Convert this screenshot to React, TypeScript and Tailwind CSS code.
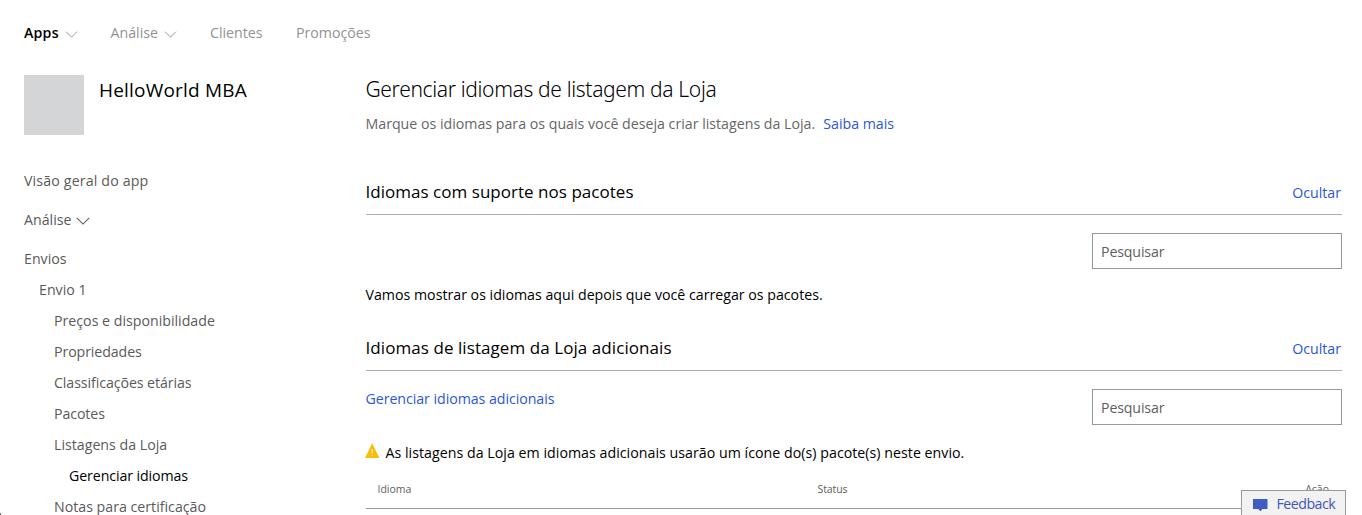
import { ReactNode } from "react";

function Chevron({ className }: { className: string }) {
  return (
    <svg viewBox="0 0 14 8" className={className} fill="none" stroke="currentColor" strokeWidth="1.05">
      <path d="M0.8 0.8 L7 7 L13.2 0.8" />
    </svg>
  );
}

function SectionHeader({ children, tracking }: { children: ReactNode; tracking: string }) {
  return (
    <div className="flex h-9 items-start justify-between border-b border-[#ababab]">
      <h2 className={`pt-px text-[17px] leading-6 ${tracking}`}>{children}</h2>
      <a className="mr-px pt-1 leading-5 text-[#2b56d6]">Ocultar</a>
    </div>
  );
}

function SearchBox() {
  return (
    <div className="h-9 w-[250px] border border-[#999] pt-2 pl-2 leading-5 tracking-[-0.15px] text-[#5e5e5e]">
      Pesquisar
    </div>
  );
}

const pages = [
  { label: "Preços e disponibilidade", tracking: "tracking-normal" },
  { label: "Propriedades", tracking: "tracking-[-0.1px]" },
  { label: "Classificações etárias", tracking: "tracking-[-0.08px]" },
  { label: "Pacotes", tracking: "tracking-[-0.1px]" },
  { label: "Listagens da Loja", tracking: "tracking-normal" },
];

function Sidebar() {
  return (
    <aside className="w-[341.5px] shrink-0">
      <div className="flex h-[90px] gap-[15px]">
        <div className="size-[60px] bg-[#d3d5d7]" />
        <h3 className="pt-[1px] text-[19px] leading-7 tracking-[0.2px] text-black">HelloWorld MBA</h3>
      </div>
      <nav className="flex flex-col leading-[31px] text-[#5a5a5a]">
        <a className="mb-2 tracking-[0.15px]">Visão geral do app</a>
        <a className="mb-2 flex items-center gap-[5px]">
          Análise
          <Chevron className="mt-0.5 h-2 w-3.5" />
        </a>
        <a>Envios</a>
        <a className="pl-[15px]">Envio 1</a>
        {pages.map(({ label, tracking }) => (
          <a key={label} className={`pl-[30px] ${tracking}`}>
            {label}
          </a>
        ))}
        <a className="pl-[45px] tracking-[-0.1px] text-black">Gerenciar idiomas</a>
        <a className="pl-[30px]">Notas para certificação</a>
      </nav>
    </aside>
  );
}

export default function App() {
  return (
    <div className="relative h-[515px] overflow-hidden bg-white font-['Open_Sans','Noto_Sans',sans-serif] text-[14.2px] text-black">
      <header className="flex h-[75px] items-start pt-[23px] pl-6 leading-5 text-[#929292]">
        <a className="flex w-[86.5px] items-center gap-1.5">
          <span className="font-semibold tracking-[0.2px] text-black">Apps</span>
          <Chevron className="mt-0.5 h-[7px] w-[13px]" />
        </a>
        <a className="flex w-[99.5px] items-center gap-1.5">
          Análise
          <Chevron className="mt-0.5 h-[7px] w-[13px]" />
        </a>
        <a className="w-[86px]">Clientes</a>
        <a>Promoções</a>
      </header>

      <div className="flex pl-6">
        <Sidebar />
        <main className="-mt-0.5 w-[976.5px]">
          <h1 className="pt-px font-['Noto_Sans','Open_Sans',sans-serif] text-[21px] leading-[31px] font-light tracking-[-0.34px]">
            Gerenciar idiomas de listagem da Loja
          </h1>
          <p className="mt-[9px] leading-5 text-[#666]">
            Marque os idiomas para os quais você deseja criar listagens da Loja.
            <a className="ml-2 text-[#2b56d6]">Saiba mais</a>
          </p>

          <section className="mt-[45px] h-[156px]">
            <SectionHeader tracking="tracking-[0.03px]">Idiomas com suporte nos pacotes</SectionHeader>
            <div className="mt-[18px] flex justify-end">
              <SearchBox />
            </div>
            <p className="mt-4 leading-5">
              Vamos mostrar os idiomas aqui depois que você carregar os pacotes.
            </p>
          </section>

          <section>
            <SectionHeader tracking="tracking-[0.07px]">Idiomas de listagem da Loja adicionais</SectionHeader>
            <div className="mt-[18px] flex items-start justify-between">
              <a className="leading-5 tracking-[-0.05px] text-[#2b56d6]">Gerenciar idiomas adicionais</a>
              <SearchBox />
            </div>
            <p className="mt-[18px] flex items-start leading-5">
              <svg viewBox="0 0 15 15" className="mr-[5px] -ml-[0.5px] size-[15px]">
                <path d="M7.2 0.3 L14.4 15 H0 Z" fill="#fbbc05" />
                <path d="M7.2 6 V10.5 M7.2 11.6 V13" stroke="#fff" strokeWidth="1" />
              </svg>
              <span className="ml-[0.5px] tracking-[0.03px]">
                As listagens da Loja em idiomas adicionais usarão um ícone do(s) pacote(s) neste envio.
              </span>
            </p>
            <div className="mt-[15px] flex h-[31px] border-b border-[#999] pr-[13px] pl-3 pt-[3px] text-[10.5px] leading-4 text-[#5e5e5e]">
              <span className="w-[440px]">Idioma</span>
              <span className="grow tracking-[-0.1px]">Status</span>
              <span>Ação</span>
            </div>
          </section>
        </main>
      </div>

      <button className="absolute top-[490px] left-[1241px] flex h-[30px] w-[105px] items-start border border-[#999] bg-[#f2f2f2] pt-[3px] pl-[10.5px] leading-5 text-[#3f56bf]">
        <svg viewBox="0 0 15 13" className="mt-[5px] mr-[9px] h-[13px] w-[15px]" fill="#3f5dc2">
          <path d="M0 0 H14.5 V10 H9.5 L7.3 12.3 L5.2 10 H0 Z" />
        </svg>
        <span className="tracking-[-0.5px]">Feedback</span>
      </button>
      <div className="absolute bottom-0 left-0 h-[2px] w-px bg-[#777]" />
    </div>
  );
}
